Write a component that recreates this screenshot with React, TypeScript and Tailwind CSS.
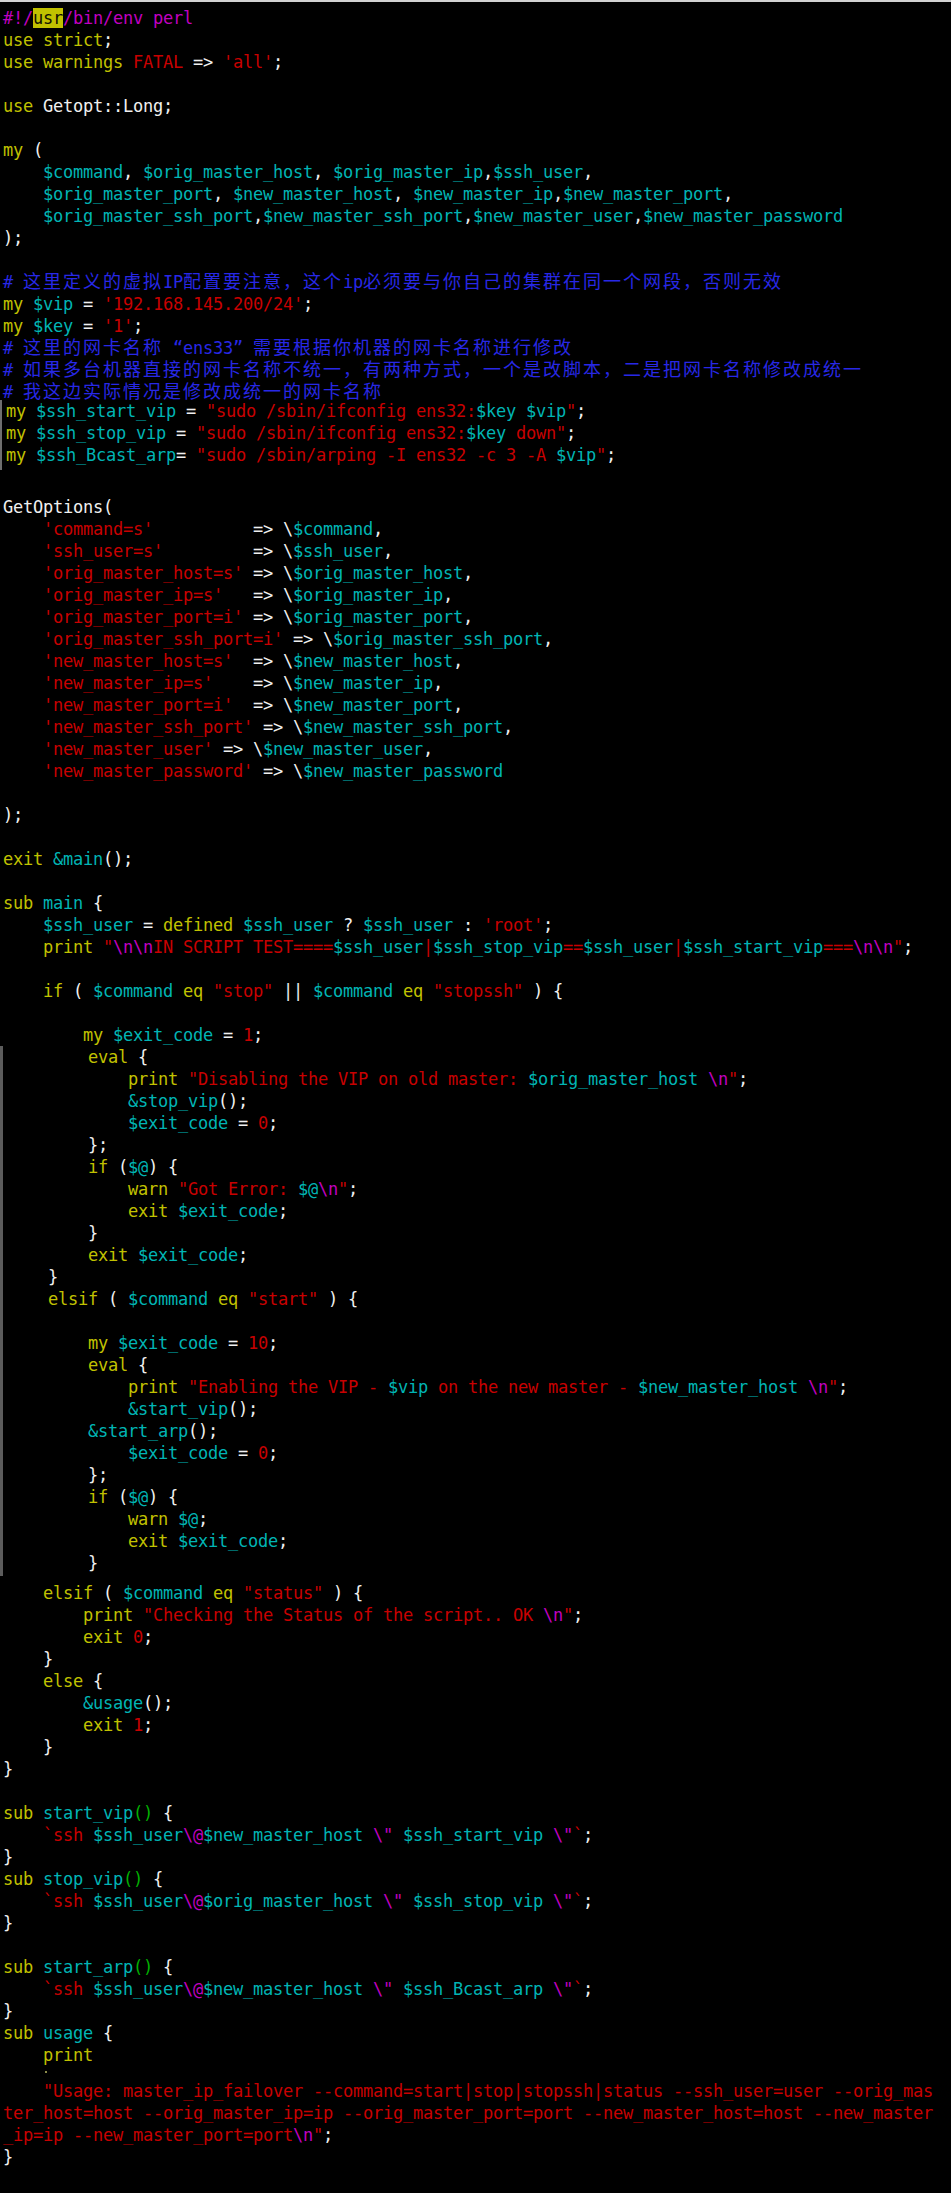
type Seg = [string, string];

const tone: Record<string, string> = {
  y: 'text-[#c1c100]',
  c: 'text-[#00b4b4]',
  r: 'text-[#c80000]',
  m: 'text-[#c000c0]',
  b: 'text-[#2828e6]',
  g: 'text-[#00b000]',
  w: 'text-[#f0f0f0]',
  h: 'bg-[#c1c100] text-[#111100]',
};

const wideRun = /[\u3000-\u303f\u4e00-\u9fff\uff00-\uffef]+/g;

function splitWide(text: string) {
  const parts: { text: string; wide: boolean }[] = [];
  let last = 0;
  for (const m of text.matchAll(wideRun)) {
    const at = m.index ?? 0;
    if (at > last) parts.push({ text: text.slice(last, at), wide: false });
    parts.push({ text: m[0], wide: true });
    last = at + m[0].length;
  }
  if (last < text.length) parts.push({ text: text.slice(last), wide: false });
  return parts;
}

// shebang, pragmas, vars and the comment block
const head: Seg[][] = [
  [['m', '#!/'], ['h', 'usr'], ['m', '/bin/env perl']],
  [['y', 'use strict'], ['w', ';']],
  [['y', 'use warnings '], ['r', 'FATAL'], ['w', ' => '], ['r', "'all'"], ['w', ';']],
  [],
  [['y', 'use '], ['w', 'Getopt::Long;']],
  [],
  [['y', 'my'], ['w', ' (']],
  [['w', '    '], ['c', '$command'], ['w', ', '], ['c', '$orig_master_host'], ['w', ', '], ['c', '$orig_master_ip'], ['w', ','], ['c', '$ssh_user'], ['w', ',']],
  [['w', '    '], ['c', '$orig_master_port'], ['w', ', '], ['c', '$new_master_host'], ['w', ', '], ['c', '$new_master_ip'], ['w', ','], ['c', '$new_master_port'], ['w', ',']],
  [['w', '    '], ['c', '$orig_master_ssh_port'], ['w', ','], ['c', '$new_master_ssh_port'], ['w', ','], ['c', '$new_master_user'], ['w', ','], ['c', '$new_master_password']],
  [['w', ');']],
  [],
  [['b', '# 这里定义的虚拟IP配置要注意，这个ip必须要与你自己的集群在同一个网段，否则无效']],
  [['y', 'my '], ['c', '$vip'], ['w', ' = '], ['r', "'192.168.145.200/24'"], ['w', ';']],
  [['y', 'my '], ['c', '$key'], ['w', ' = '], ['r', "'1'"], ['w', ';']],
  [['b', '# 这里的网卡名称 “ens33” 需要根据你机器的网卡名称进行修改']],
  [['b', '# 如果多台机器直接的网卡名称不统一，有两种方式，一个是改脚本，二是把网卡名称修改成统一']],
  [['b', '# 我这边实际情况是修改成统一的网卡名称']],
];

const sshCmds: Seg[][] = [
  [['y', 'my '], ['c', '$ssh_start_vip'], ['w', ' = '], ['r', '"sudo /sbin/ifconfig ens32:'], ['c', '$key'], ['r', ' '], ['c', '$vip'], ['r', '"'], ['w', ';']],
  [['y', 'my '], ['c', '$ssh_stop_vip'], ['w', ' = '], ['r', '"sudo /sbin/ifconfig ens32:'], ['c', '$key'], ['r', ' down"'], ['w', ';']],
  [['y', 'my '], ['c', '$ssh_Bcast_arp'], ['w', '= '], ['r', '"sudo /sbin/arping -I ens32 -c 3 -A '], ['c', '$vip'], ['r', '"'], ['w', ';']],
];

const opt = (name: string, pad: string, v: string, last = false): Seg[] => [
  ['w', '    '],
  ['r', `'${name}'`],
  ['w', `${pad}=> \\`],
  ['c', v],
  ['w', last ? '' : ','],
];

const options: Seg[][] = [
  [['w', 'GetOptions(']],
  opt('command=s', '          ', '$command'),
  opt('ssh_user=s', '         ', '$ssh_user'),
  opt('orig_master_host=s', ' ', '$orig_master_host'),
  opt('orig_master_ip=s', '   ', '$orig_master_ip'),
  opt('orig_master_port=i', ' ', '$orig_master_port'),
  opt('orig_master_ssh_port=i', ' ', '$orig_master_ssh_port'),
  opt('new_master_host=s', '  ', '$new_master_host'),
  opt('new_master_ip=s', '    ', '$new_master_ip'),
  opt('new_master_port=i', '  ', '$new_master_port'),
  opt('new_master_ssh_port', ' ', '$new_master_ssh_port'),
  opt('new_master_user', ' ', '$new_master_user'),
  opt('new_master_password', ' ', '$new_master_password', true),
  [],
  [['w', ');']],
  [],
  [['y', 'exit '], ['c', '&main'], ['w', '();']],
  [],
  [['y', 'sub '], ['c', 'main'], ['w', ' {']],
  [['w', '    '], ['c', '$ssh_user'], ['w', ' = '], ['y', 'defined '], ['c', '$ssh_user'], ['w', ' ? '], ['c', '$ssh_user'], ['w', ' : '], ['r', "'root'"], ['w', ';']],
  [['w', '    '], ['y', 'print '], ['r', '"'], ['m', '\\n\\n'], ['r', 'IN SCRIPT TEST===='], ['c', '$ssh_user'], ['r', '|'], ['c', '$ssh_stop_vip'], ['r', '=='], ['c', '$ssh_user'], ['r', '|'], ['c', '$ssh_start_vip'], ['r', '==='], ['m', '\\n\\n'], ['r', '"'], ['w', ';']],
  [],
  [['w', '    '], ['y', 'if'], ['w', ' ( '], ['c', '$command'], ['y', ' eq '], ['r', '"stop"'], ['w', ' || '], ['c', '$command'], ['y', ' eq '], ['r', '"stopssh"'], ['w', ' ) {']],
  [],
  [['w', '        '], ['y', 'my '], ['c', '$exit_code'], ['w', ' = '], ['r', '1'], ['w', ';']],
];

// pasted block, sits a few px to the right with a bar on the left
const evalBlock: Seg[][] = [
  [['w', '        '], ['y', 'eval'], ['w', ' {']],
  [['w', '            '], ['y', 'print '], ['r', '"Disabling the VIP on old master: '], ['c', '$orig_master_host'], ['r', ' '], ['m', '\\n'], ['r', '"'], ['w', ';']],
  [['w', '            '], ['c', '&stop_vip'], ['w', '();']],
  [['w', '            '], ['c', '$exit_code'], ['w', ' = '], ['r', '0'], ['w', ';']],
  [['w', '        };']],
  [['w', '        '], ['y', 'if'], ['w', ' ('], ['c', '$@'], ['w', ') {']],
  [['w', '            '], ['y', 'warn '], ['r', '"Got Error: '], ['c', '$@'], ['m', '\\n'], ['r', '"'], ['w', ';']],
  [['w', '            '], ['y', 'exit '], ['c', '$exit_code'], ['w', ';']],
  [['w', '        }']],
  [['w', '        '], ['y', 'exit '], ['c', '$exit_code'], ['w', ';']],
  [['w', '    }']],
  [['w', '    '], ['y', 'elsif'], ['w', ' ( '], ['c', '$command'], ['y', ' eq '], ['r', '"start"'], ['w', ' ) {']],
  [],
  [['w', '        '], ['y', 'my '], ['c', '$exit_code'], ['w', ' = '], ['r', '10'], ['w', ';']],
  [['w', '        '], ['y', 'eval'], ['w', ' {']],
  [['w', '            '], ['y', 'print '], ['r', '"Enabling the VIP - '], ['c', '$vip'], ['r', ' on the new master - '], ['c', '$new_master_host'], ['r', ' '], ['m', '\\n'], ['r', '"'], ['w', ';']],
  [['w', '            '], ['c', '&start_vip'], ['w', '();']],
  [['w', '        '], ['c', '&start_arp'], ['w', '();']],
  [['w', '            '], ['c', '$exit_code'], ['w', ' = '], ['r', '0'], ['w', ';']],
  [['w', '        };']],
  [['w', '        '], ['y', 'if'], ['w', ' ('], ['c', '$@'], ['w', ') {']],
  [['w', '            '], ['y', 'warn '], ['c', '$@'], ['w', ';']],
  [['w', '            '], ['y', 'exit '], ['c', '$exit_code'], ['w', ';']],
  [['w', '        }']],
];

const ssh = (host: string, cmd: string): Seg[] => [
  ['w', '    '],
  ['r', '`ssh '],
  ['c', '$ssh_user'],
  ['m', '\\@'],
  ['c', host],
  ['m', ' \\"'],
  ['r', ' '],
  ['c', cmd],
  ['m', ' \\"'],
  ['r', '`'],
  ['w', ';'],
];

const tail: Seg[][] = [
  [['w', '    '], ['y', 'elsif'], ['w', ' ( '], ['c', '$command'], ['y', ' eq '], ['r', '"status"'], ['w', ' ) {']],
  [['w', '        '], ['y', 'print '], ['r', '"Checking the Status of the script.. OK '], ['m', '\\n'], ['r', '"'], ['w', ';']],
  [['w', '        '], ['y', 'exit '], ['r', '0'], ['w', ';']],
  [['w', '    }']],
  [['w', '    '], ['y', 'else'], ['w', ' {']],
  [['w', '        '], ['c', '&usage'], ['w', '();']],
  [['w', '        '], ['y', 'exit '], ['r', '1'], ['w', ';']],
  [['w', '    }']],
  [['w', '}']],
  [],
  [['y', 'sub '], ['c', 'start_vip'], ['g', '()'], ['w', ' {']],
  ssh('$new_master_host', '$ssh_start_vip'),
  [['w', '}']],
  [['y', 'sub '], ['c', 'stop_vip'], ['g', '()'], ['w', ' {']],
  ssh('$orig_master_host', '$ssh_stop_vip'),
  [['w', '}']],
  [],
  [['y', 'sub '], ['c', 'start_arp'], ['g', '()'], ['w', ' {']],
  ssh('$new_master_host', '$ssh_Bcast_arp'),
  [['w', '}']],
  [['y', 'sub '], ['c', 'usage'], ['w', ' {']],
  [['w', '    '], ['y', 'print']],
];

const usage: Seg[][] = [
  [['w', '    '], ['r', '"Usage: master_ip_failover --command=start|stop|stopssh|status --ssh_user=user --orig_mas']],
  [['r', 'ter_host=host --orig_master_ip=ip --orig_master_port=port --new_master_host=host --new_master']],
  [['r', '_ip=ip --new_master_port=port'], ['m', '\\n'], ['r', '"'], ['w', ';']],
  [['w', '}']],
];

function Line({ segs }: { segs: Seg[] }) {
  return (
    <div className="h-[22px] whitespace-pre leading-[22px]">
      {segs.map(([t, text], i) =>
        t === 'b' ? (
          <span key={i} className={tone.b}>
            {splitWide(text).map((p, j) =>
              p.wide ? (
                <span
                  key={j}
                  className="font-['Noto_Sans_CJK_SC',sans-serif] text-[18px] leading-none tracking-[2px]"
                >
                  {p.text}
                </span>
              ) : (
                <span key={j}>{p.text}</span>
              ),
            )}
          </span>
        ) : (
          <span key={i} className={tone[t]}>
            {text}
          </span>
        ),
      )}
    </div>
  );
}

function Block({ lines }: { lines: Seg[][] }) {
  return (
    <>
      {lines.map((segs, i) => (
        <Line key={i} segs={segs} />
      ))}
    </>
  );
}

export default function App() {
  return (
    <div className="min-h-screen w-full bg-black font-['DejaVu_Sans_Mono','Noto_Sans_CJK_SC',monospace] text-[17px] tracking-[-0.235px] text-[#f0f0f0]">
      <div className="h-[2px] bg-[#d2d2d2]" />
      <div className="mt-[5px] pl-[3px]">
        <Block lines={head} />
      </div>
      <div className="-mt-[3px] border-l-2 border-[#6e6e6e] pb-[4px] pl-[4px]">
        <Block lines={sshCmds} />
      </div>
      <div className="mt-[26px] pl-[3px]">
        <Block lines={options} />
      </div>
      <div className="border-l-[3px] border-[#5c5c5c] pb-[2px] pl-[5px]">
        <Block lines={evalBlock} />
      </div>
      <div className="mt-[6px] pl-[3px]">
        <Block lines={tail} />
        <div className="h-[9px]">
          <div className="ml-[42px] mt-[5px] h-[2px] w-[2px] bg-[#8c8c4a]" />
        </div>
        <Block lines={usage} />
      </div>
    </div>
  );
}
